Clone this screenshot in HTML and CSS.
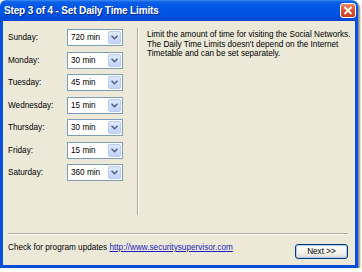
FILE: index.html
```html
<!DOCTYPE html>
<html lang="en">
<head>
    <meta charset="UTF-8">
    <title>Step 3 of 4 - Set Daily Time Limits</title>
    <link rel="stylesheet" href="styles.css">
</head>
<body>
    <div class="window">
        <div class="titlebar">
            <span class="title">Step 3 of 4 - Set Daily Time Limits</span>
            <span class="close">
                <svg width="10" height="9" viewBox="0 0 10 9"><path d="M1.5 1 L8.5 8 M8.5 1 L1.5 8" stroke="#fff" stroke-width="1.8" fill="none"/></svg>
            </span>
        </div>
        <div class="frame">
            <div class="main">
                <div class="days">
                    <label>Sunday:</label>
                    <div class="combo"><span>720 min</span><span class="drop"><svg width="7" height="5" viewBox="0 0 7 5"><path d="M0.5 0.8 L3.5 3.8 L6.5 0.8" stroke="#4d6185" stroke-width="1.5" fill="none"/></svg></span></div>
                    <label>Monday:</label>
                    <div class="combo"><span>30 min</span><span class="drop"><svg width="7" height="5" viewBox="0 0 7 5"><path d="M0.5 0.8 L3.5 3.8 L6.5 0.8" stroke="#4d6185" stroke-width="1.5" fill="none"/></svg></span></div>
                    <label>Tuesday:</label>
                    <div class="combo"><span>45 min</span><span class="drop"><svg width="7" height="5" viewBox="0 0 7 5"><path d="M0.5 0.8 L3.5 3.8 L6.5 0.8" stroke="#4d6185" stroke-width="1.5" fill="none"/></svg></span></div>
                    <label>Wednesday:</label>
                    <div class="combo"><span>15 min</span><span class="drop"><svg width="7" height="5" viewBox="0 0 7 5"><path d="M0.5 0.8 L3.5 3.8 L6.5 0.8" stroke="#4d6185" stroke-width="1.5" fill="none"/></svg></span></div>
                    <label>Thursday:</label>
                    <div class="combo"><span>30 min</span><span class="drop"><svg width="7" height="5" viewBox="0 0 7 5"><path d="M0.5 0.8 L3.5 3.8 L6.5 0.8" stroke="#4d6185" stroke-width="1.5" fill="none"/></svg></span></div>
                    <label>Friday:</label>
                    <div class="combo"><span>15 min</span><span class="drop"><svg width="7" height="5" viewBox="0 0 7 5"><path d="M0.5 0.8 L3.5 3.8 L6.5 0.8" stroke="#4d6185" stroke-width="1.5" fill="none"/></svg></span></div>
                    <label>Saturday:</label>
                    <div class="combo"><span>360 min</span><span class="drop"><svg width="7" height="5" viewBox="0 0 7 5"><path d="M0.5 0.8 L3.5 3.8 L6.5 0.8" stroke="#4d6185" stroke-width="1.5" fill="none"/></svg></span></div>
                </div>
                <div class="vsep"></div>
                <p class="desc">Limit the amount of time for visiting the Social Networks.<br>The Daily Time Limits doesn't depend on the Internet<br>Timetable and can be set separately.</p>
            </div>
            <div class="hsep"></div>
            <div class="footer">
                <span class="updates">Check for program updates <a href="#">http://www.securitysupervisor.com</a></span>
                <button class="next">Next &gt;&gt;</button>
            </div>
        </div>
    </div>
</body>
</html>
```

FILE: styles.css
```css
* {
    box-sizing: border-box;
    margin: 0;
    padding: 0;
}

body {
    background: #fff;
    font-family: "Liberation Sans", Arial, sans-serif;
    font-size: 8.2px;
    color: #000;
}
.window {
    width: 358px;
    height: 268px;
    display: flex;
    flex-direction: column;
    box-shadow: 2px 2px 2px rgba(0, 0, 0, 0.45);
    border-radius: 6px 6px 0 0;
    overflow: hidden;
}
.titlebar {
    height: 21px;
    flex: none;
    display: flex;
    align-items: flex-start;
    justify-content: space-between;
    padding: 4px 2px 0 4px;
    background: linear-gradient(to bottom, #3d8cf5 0, #0a5fe6 2px, #0056e6 7px, #0053e3 14px, #0046d2 21px);
}
.title {
    color: #fff;
    font-weight: bold;
    font-size: 10px;
    letter-spacing: -0.15px;
    line-height: 13px;
    text-shadow: 1px 1px 0 #0a2a8a;
}
.close {
    width: 16px;
    height: 15px;
    margin-top: -1px;
    display: flex;
    align-items: center;
    justify-content: center;
    border: 1px solid #fff;
    border-radius: 3px;
    background: linear-gradient(to bottom, #e8896c, #d9532e 50%, #c73f1a);
}
.frame {
    flex: 1;
    display: flex;
    flex-direction: column;
    background: #ece9d8;
    border: 3px solid #0850d8;
    border-top: none;
    padding: 7px 7px 0 5px;
}
.main {
    height: 187px;
    display: flex;
}
.days {
    width: 118px;
    padding-top: 1px;
    display: grid;
    grid-template-columns: 59px 56px;
    grid-auto-rows: 17px;
    row-gap: 5.5px;
}
.days label {
    padding-top: 4px;
    line-height: 10px;
}
.combo {
    display: flex;
    align-items: center;
    justify-content: space-between;
    background: #fff;
    border: 1px solid #7f9db9;
    padding: 1px 1px 1px 3px;
}
.drop {
    width: 13px;
    height: 13px;
    display: flex;
    align-items: center;
    justify-content: center;
    border: 1px solid #b8cbf4;
    border-radius: 2px;
    background: linear-gradient(to bottom, #dfe8fd, #c1d3fb);
}
.vsep {
    width: 2px;
    margin-left: 14px;
    border-left: 1px solid #aca899;
    border-right: 1px solid #fff;
}
.desc {
    margin-left: 8px;
    padding-top: 2px;
    line-height: 9.6px;
    white-space: nowrap;
}
.hsep {
    height: 2px;
    margin-top: 18px;
    border-top: 1px solid #aca899;
    border-bottom: 1px solid #fff;
}
.footer {
    display: flex;
    justify-content: space-between;
    align-items: flex-start;
    margin-top: 8px;
}
.updates {
    line-height: 10px;
}
.updates a {
    color: #1d1dbd;
}
.next {
    width: 53px;
    height: 15px;
    margin-top: 1px;
    font-family: inherit;
    font-size: 8.2px;
    color: #000;
    border: 1px solid #003c74;
    border-radius: 3px;
    background: linear-gradient(to bottom, #fff, #f3f2ee 60%, #dcdad0);
    box-shadow: inset 0 0 0 1px #b0c8f2;
}
```
